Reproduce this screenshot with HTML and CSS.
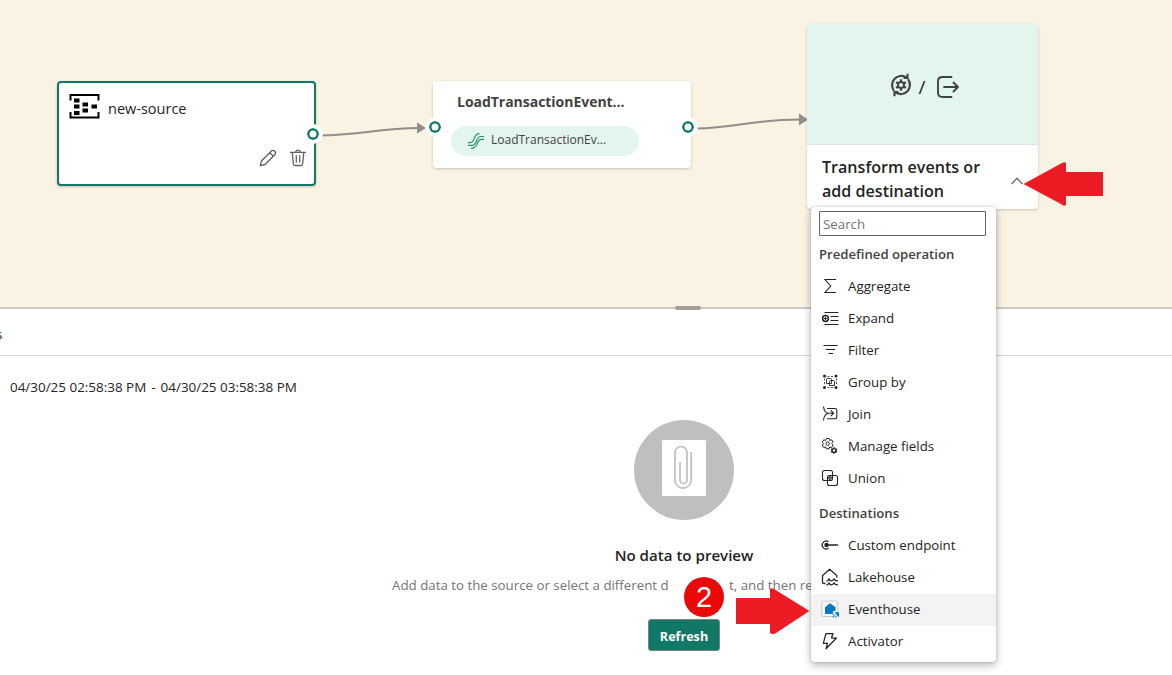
FILE: index.html
```html
<!DOCTYPE html>
<html lang="en">
<head>
<meta charset="utf-8">
<title>Eventstream</title>
<link rel="stylesheet" href="styles.css">
</head>
<body>
<div class="app">
  <section class="canvas">
    <svg class="edges" width="1172" height="307" viewBox="0 0 1172 307">
      <path class="edge" d="M320 135.500C358 135 378 128.500 420 128"/>
      <path class="edge" d="M696 128.500C736 128 752 119.500 800 119.500"/>
      <path class="tip" d="M417 122.500L426 128L417 133.500ZM799 113.500L808 119.500L799 125.500Z"/>
    </svg>

    <article class="node source">
      <div class="source-title">
        <svg width="32" height="28" viewBox="0 0 32 28">
          <path d="M1.500 8.500V3H29.500V8.500M1.500 20V25.500H29.500V20" fill="none" stroke="#000" stroke-width="2"/>
          <path d="M5 6.500h5.500v4H5zM5 12.500h5.500v4H5zM5 19h5.500v4H5zM13.500 10.500H19v4h-5.500zM13.500 16.500H19v4h-5.500zM22.500 12.500H28v4h-5.500z"/>
        </svg>
        <span class="source-name">new-source</span>
      </div>
      <div class="source-actions">
        <svg width="20" height="20" viewBox="0 0 20 20" class="gray-icon">
          <path d="M2.300 17.700L3.500 13L13.200 3.200Q14.900 1.600 16.700 3.200Q18.400 5 16.800 6.800L7 16.500ZM11.800 4.600L15.400 8.200"/>
        </svg>
        <svg width="20" height="20" viewBox="0 0 20 20" class="gray-icon">
          <path d="M2.400 4.300H17.600M7.800 4.200Q7.800 2.200 10 2.200Q12.200 2.200 12.200 4.200M4.200 4.500L5.400 16Q5.600 17.500 7 17.500H13Q14.400 17.500 14.600 16L15.800 4.500M8.300 7.700V14M11.700 7.700V14"/>
        </svg>
      </div>
    </article>

    <article class="node stream">
      <h3 class="stream-title">LoadTransactionEvent...</h3>
      <div class="pill">
        <svg width="18" height="18" viewBox="0 0 18 18" fill="none" stroke="#2b8b73" stroke-width="1.200">
          <path d="M1 10.600H3C9 10.600 5.500 1.600 12.500 1.600M1 13.400H4.500C11.500 13.400 7.500 4.500 14 4.500H17M4 16.400C12.500 16.400 8.500 7.400 14.500 7.400H17"/>
        </svg>
        <span class="pill-text">LoadTransactionEv...</span>
      </div>
    </article>

    <article class="node target">
      <div class="target-art">
        <svg width="24" height="26" viewBox="0 0 24 26" fill="none" stroke="#424242">
          <path stroke-width="2.200" d="M5 18.800A9.200 9.200 0 0 1 17.500 5.600M19 7.200A9.200 9.200 0 0 1 6.500 20.400"/>
          <path stroke-width="2.200" d="M18.500 1.800V6H14.500M5.500 24.200V20H9.500"/>
          <circle cx="12" cy="13" r="3" stroke-width="2"/>
          <path stroke-width="2.200" d="M12 7.300V9.500M12 16.500V18.700M7 10.200L9 11.300M15 14.700L17 15.800M7 15.800L9 14.700M15 11.300L17 10.200"/>
        </svg>
        <span class="slash">/</span>
        <svg width="24" height="24" viewBox="0 0 24 24" fill="none" stroke="#424242" stroke-width="1.900" stroke-linecap="round" stroke-linejoin="round">
          <path d="M15.500 2H6.500Q2 2 2 6.500V17.500Q2 22 6.500 22H15.500M8 12H22M17.500 7.500L22 12L17.500 16.500"/>
        </svg>
      </div>
      <div class="target-foot">
        <h3 class="target-title">Transform events or<br>add destination</h3>
        <svg width="14" height="10" viewBox="0 0 14 10" fill="none" stroke="#707070" stroke-width="1.400"><path d="M1.500 8L7 2.200L12.500 8"/></svg>
      </div>
    </article>

    <i class="port port-a"></i>
    <i class="port port-b"></i>
    <i class="port port-c"></i>
  </section>

  <section class="panel">
    <div class="grip"></div>
    <div class="tabs"><span>s</span></div>
    <p class="range"><span>04/30/25 02:58:38 PM</span><span>-</span><span>04/30/25 03:58:38 PM</span></p>
    <div class="empty">
      <svg width="100" height="100" viewBox="0 0 100 100">
        <circle cx="50" cy="50" r="50" fill="#bfbfbf"/>
        <rect x="28" y="20" width="44" height="56" rx="1.500" fill="#fff"/>
        <path d="M57.200 32V60A8 8 0 0 1 41 60V32.500A6 6 0 0 1 53 32.500V60A3.500 3.500 0 0 1 46 60V42" fill="none" stroke="#bfbfbf" stroke-width="1.700"/>
      </svg>
      <h2 class="empty-title">No data to preview</h2>
      <p class="hint"><span class="hint-a">Add data to the source or select a different d</span><span class="hint-b">t, and then re</span></p>
      <button class="refresh">Refresh</button>
    </div>
  </section>

  <div class="menu">
    <input class="search" placeholder="Search">
    <h4 class="group">Predefined operation</h4>
    <ul class="list">
      <li class="item"><svg width="18" height="18" viewBox="0 0 18 18"><path d="M15 2.500H4L9.800 9L4 15.500H15"/></svg><span>Aggregate</span></li>
      <li class="item"><svg width="18" height="18" viewBox="0 0 18 18"><path d="M3.500 3.500H17.500M9.500 7.500H17.500M9.500 11.500H17.500M3.500 15.500H17.500"/><circle cx="4.500" cy="9.500" r="2.900" stroke-width="1.500"/><path d="M4.500 7.800V11.200M2.800 9.500H6.200" stroke-width="1"/></svg><span>Expand</span></li>
      <li class="item"><svg width="18" height="18" viewBox="0 0 18 18"><path d="M2.500 4.500H16.500M5 8.500H14M7.500 12.500H12"/></svg><span>Filter</span></li>
      <li class="item"><svg width="18" height="18" viewBox="0 0 18 18"><path d="M6.500 3.500H12.500M6.500 14.500H12.500M3.500 5.500V12M15.500 5.500V12" stroke-width=".8" stroke-dasharray="2 1.500"/><path d="M5.500 10.500V6.500Q5.500 5.500 6.500 5.500H9.500Q10.500 5.500 10.500 6.500V10.500H5.500M8.500 12.500V8.500Q8.500 7.500 9.500 7.500H12.500Q13.500 7.500 13.500 8.500V12.500H8.500" stroke-width=".9"/><circle class="solid" cx="3.500" cy="3" r="1.500"/><circle class="solid" cx="15" cy="3" r="1.500"/><circle class="solid" cx="3.500" cy="14.500" r="1.500"/><circle class="solid" cx="15" cy="14.500" r="1.500"/></svg><span>Group by</span></li>
      <li class="item"><svg width="18" height="18" viewBox="0 0 18 18"><path d="M2.500 1.500Q3.300 8.300 8 8.300H12.500M2.500 15.500Q3.300 8.300 8 8.300M9.800 5.500L12.600 8.300L9.800 11.100M6 3.500H14Q15.800 3.500 15.800 5.300V12Q15.800 13.700 14 13.700H6"/></svg><span>Join</span></li>
      <li class="item"><svg width="18" height="18" viewBox="0 0 18 18"><path d="M5.300 1.500H8.100L8.700 3.400L10.700 2.800L12.100 5.200L10.700 6.600L12.100 8.100L10.700 10.500L8.700 9.900L8.100 11.800H5.300L4.700 9.900L2.700 10.500L1.300 8.100L2.700 6.600L1.300 5.200L2.700 2.800L4.700 3.400Z" stroke-width="1"/><circle cx="6.700" cy="6.600" r="1.700" stroke-width="1"/><circle cx="13" cy="13.500" r="1.900" stroke-width="1.400"/><path d="M13 10.200V11.500M13 15.500V16.800M10.100 11.800L11.300 12.500M14.700 14.500L15.900 15.200M10.100 15.200L11.300 14.500M14.700 12.500L15.900 11.800" stroke-width="1.500"/></svg><span>Manage fields</span></li>
      <li class="item"><svg width="18" height="18" viewBox="0 0 18 18"><rect x="1.500" y="1.500" width="10" height="10" rx="2"/><rect x="6.500" y="6.500" width="10" height="10" rx="2"/><path d="M7 9.500L9.500 7M8 11L11 8"/></svg><span>Union</span></li>
    </ul>
    <h4 class="group group-dest">Destinations</h4>
    <ul class="list list-dest">
      <li class="item"><svg width="18" height="18" viewBox="0 0 18 18"><path d="M7.500 5.700A4 4 0 1 0 7.500 12.300M5 9H17" stroke-width="1.300"/><circle class="solid" cx="5.500" cy="9" r="2.200"/></svg><span>Custom endpoint</span></li>
      <li class="item"><svg width="18" height="18" viewBox="0 0 18 18"><path d="M4.500 15.500H3Q1.500 15.500 1.500 14V7.500L8.700 1.300L15.700 7.500V9.500M5.500 13Q7 12.800 8 11Q9 13 10.500 12.800Q12 12.800 13 11Q14 13 17 12.800M5.500 17Q7 16.800 8 15Q9 17 10.500 16.800Q12 16.800 13 15Q14 17 17 16.800" stroke-width="1.300"/></svg><span>Lakehouse</span></li>
      <li class="item active"><svg width="18" height="18" viewBox="0 0 18 18"><rect x=".7" y="1" width="16" height="15.500" rx="1.500" fill="#f7f7f7" stroke="#c8c8c8" stroke-width="1"/><path fill="#0078c8" stroke="none" d="M9 3.300L14.500 7.300V11H12V14H5Q4 14 4 13V7.300Z"/><path d="M13.300 12.200H18V17.200Z" fill="#0078c8" stroke="none"/><path d="M11.500 13.500L15.500 17.500M11.500 16L13 17.500" stroke="#49a5dc"/></svg><span>Eventhouse</span></li>
      <li class="item"><svg width="18" height="18" viewBox="0 0 18 18"><path d="M5 1.500H12L10.500 6H15.500L5 16.800L6.500 11.300H2.300Z" stroke-width="1.250" stroke-linejoin="round"/></svg><span>Activator</span></li>
    </ul>
  </div>

  <svg class="mark mark-left" width="79" height="44" viewBox="0 0 79 44"><path d="M-1.500 22L37 1Q41-1 41 2V10H78V34H41V43Q39 45 36 42Z"/></svg>
  <svg class="mark mark-right" width="74" height="47" viewBox="0 0 74 47"><path d="M73.500 23L38 1Q34-1 34 2V10H0V36H34V45Q37 47 40 45Z"/></svg>
  <span class="badge">2</span>
</div>
</body>
</html>
```
FILE: styles.css
```css
* { box-sizing: border-box; }
body { margin: 0; font-family: "Open Sans", "Noto Sans", sans-serif; font-size: 13.3px; color: #242424; background: #fff; }
h2, h3, h4, p, ul { margin: 0; padding: 0; font-weight: 400; }
svg { display: block; flex: none; }

.app { position: relative; width: 1172px; height: 675px; overflow: hidden; }

.canvas { position: relative; height: 307px; background: #faf2e2; }
.edges { position: absolute; left: 0; top: 0; }
.edge { fill: none; stroke: #8f8e8b; stroke-width: 2; }
.tip { fill: #8f8e8b; }

.node { position: absolute; background: #fff; border-radius: 4px; box-shadow: 0 1px 3px rgba(0, 0, 0, .2); }
.source { left: 57px; top: 81px; width: 259px; height: 104.5px; border: 2px solid #117865; display: flex; flex-direction: column; justify-content: space-between; padding: 9px 6px 15.5px 10px; }
.source-title { display: flex; align-items: center; gap: 7px; }
.source-name { padding-top: 6px; font-size: 14.5px; line-height: 20px; }
.source-actions { display: flex; justify-content: flex-end; gap: 10px; }
.gray-icon { fill: none; stroke: #616161; stroke-width: 1.3; stroke-linejoin: round; stroke-linecap: round; }

.stream { left: 433px; top: 81px; width: 258px; height: 87px; padding: 10px 18px 0; }
.stream-title { padding-left: 6px; font-size: 14px; line-height: 22px; font-weight: 700; letter-spacing: -.03px; color: #424242; white-space: nowrap; }
.pill { display: flex; align-items: center; gap: 6px; width: 188px; height: 30px; margin-top: 12.5px; padding-left: 16px; border-radius: 15px; background: #e3f6ed; }
.pill-text { padding-bottom: 3px; font-size: 12px; font-weight: 500; color: #424242; }

.target { left: 807px; top: 24px; width: 231px; height: 185px; overflow: hidden; }
.target-art { display: flex; align-items: center; justify-content: center; height: 121px; padding: 5px 0 0 4px; background: #e3f6ed; border-bottom: 1px solid #dce7e2; }
.slash { width: 18px; margin-right: 5px; text-align: center; font-size: 19px; line-height: 24px; }
.target-art svg:first-child { margin-bottom: 4px; }
.target-foot { display: flex; align-items: center; justify-content: space-between; padding: 10px 14px 0 15px; }
.target-title { font-size: 16.1px; font-weight: 600; line-height: 24px; white-space: nowrap; }
.target-foot svg { margin-top: 3px; }

.port { position: absolute; width: 20px; height: 20px; border: 4px solid #fff; border-radius: 50%; background: #fff; box-shadow: inset 0 0 0 2.500px #117865; }
.port-a { left: 303.3px; top: 124.4px; }
.port-b { left: 424.5px; top: 117px; }
.port-c { left: 678.3px; top: 117px; }

.panel { position: relative; border-top: 2px solid #ccc9c6; }
.grip { position: absolute; left: 675px; top: -3px; width: 26px; height: 4px; border-radius: 2px; background: #a09e9c; }
.tabs { height: 47px; border-bottom: 1px solid #d6d6d6; padding-top: 14px; line-height: 22px; }
.tabs span { margin-left: -4px; }
.range { display: flex; gap: 5px; padding: 21px 10px 0; line-height: 20px; font-size: 13.45px; white-space: nowrap; }
.empty { display: flex; flex-direction: column; align-items: center; width: 584px; margin: 23px 0 0 392px; }
.empty-title { margin-top: 23px; line-height: 24px; font-size: 15.1px; font-weight: 600; }
.hint { display: flex; gap: 61px; margin-top: 8px; align-self: flex-start; line-height: 20px; color: #757575; white-space: nowrap; }
.hint-a { width: 276px; }
.refresh { width: 72px; height: 32px; margin-top: 24px; padding: 2px 0 0; border: 1px solid #7c8580; border-radius: 3px; background: #117865; color: #fff; font: 700 12.6px "Open Sans", sans-serif; }

.menu { position: absolute; left: 811px; top: 207px; width: 185px; height: 455px; padding-top: 4px; border-radius: 4px; background: #fff; box-shadow: 0 0 2px rgba(0, 0, 0, .2), 0 3px 8px rgba(0, 0, 0, .3); }
.search { display: block; width: 167px; height: 25px; margin-left: 8px; padding: 1px 3px; border: 1px solid #666; border-radius: 1px; font: 13.300px "Open Sans", sans-serif; }
.search::placeholder { color: #757575; }
.group { height: 34px; padding: 2px 8px 0; line-height: 32px; font-size: 13.150px; font-weight: 600; color: #424242; }
.group-dest { height: 36px; line-height: 34px; }
.list { list-style: none; }
.item { display: flex; align-items: center; gap: 9px; height: 32px; padding-left: 10px; }
.list-dest .item { padding-bottom: 2px; }
.item svg { fill: none; stroke: #242424; stroke-width: 1.1; overflow: visible; }
.item .solid { fill: #242424; stroke: none; }
.active { background: #f3f3f3; }

.mark { position: absolute; overflow: visible; fill: #ed1c24; }
.mark-left { left: 1025px; top: 162px; }
.mark-right { left: 736px; top: 588px; }
.badge { position: absolute; left: 684px; top: 577px; width: 40px; height: 40px; border-radius: 50%; background: #eb0808; color: #fff; font: 29px/40px "Liberation Sans", sans-serif; text-align: center; }
```
